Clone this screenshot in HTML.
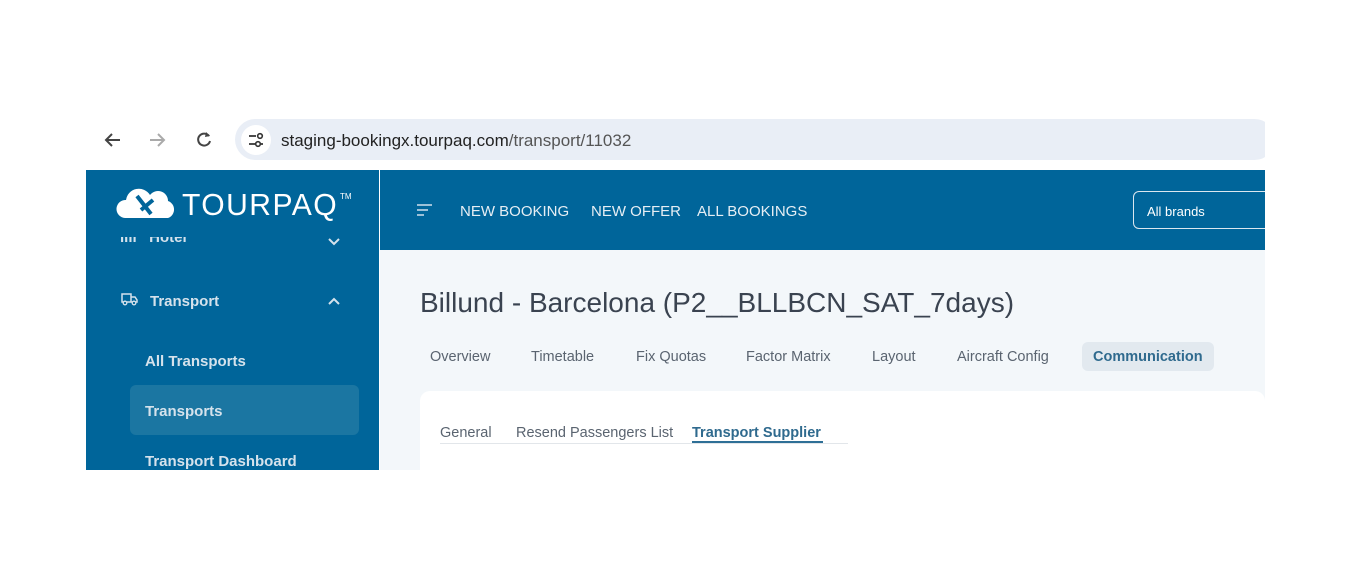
<!DOCTYPE html>
<html><head><style>
*{margin:0;padding:0;box-sizing:border-box}
body{width:1350px;height:581px;background:#fff;position:relative;overflow:hidden;font-family:"Liberation Sans",sans-serif}
.abs{position:absolute}
.side{left:86px;top:170px;width:293px;height:300px;background:#00659a;overflow:hidden}
.hdr{left:380px;top:170px;width:885px;height:80px;background:#00659a}
.main{left:380px;top:250px;width:885px;height:220px;background:#f3f7fa;overflow:hidden}
.st{color:#d5e2ec;font-weight:bold;font-size:15px;position:absolute}
.tab{position:absolute;top:349px;font-size:14.5px;color:#5a6470}
</style></head><body>
<div class="abs" style="left:86px;top:110px;width:1179px;height:60px;background:#fff"></div>
<svg class="abs" style="left:100px;top:128px" width="120" height="24" viewBox="0 0 120 24">
<path d="M20 12H6M12 6l-6 6 6 6" stroke="#444" stroke-width="2" fill="none"/>
<path d="M50 12h14M58 6l6 6-6 6" stroke="#aaa" stroke-width="2" fill="none"/>
<path d="M109 8a6 6 0 1 0 1 5" stroke="#444" stroke-width="2" fill="none"/><path d="M106 4l4 4-5 1z" fill="#444"/>
</svg>
<div class="abs" style="left:235px;top:119px;width:1040px;height:41px;border-radius:21px;background:#e9eef6"></div>
<div class="abs" style="left:241px;top:125px;width:30px;height:30px;border-radius:15px;background:#fff"></div>
<svg class="abs" style="left:246px;top:130px" width="20" height="20" viewBox="0 0 20 20"><path d="M3 6h7M3 14h7M14 14h3" stroke="#333" stroke-width="1.8"/><circle cx="14" cy="6" r="2.3" fill="none" stroke="#333" stroke-width="1.6"/><circle cx="12" cy="14" r="2.3" fill="none" stroke="#333" stroke-width="1.6"/></svg>
<div class="abs" style="left:281px;top:131px;font-size:17px;color:#222">staging-bookingx.tourpaq.com<span style="color:#555">/transport/11032</span></div>

<div class="abs side">
 <div class="abs" style="left:30px;top:67px;width:240px;height:12px;overflow:hidden">
  <div class="st" style="left:4px;top:-8px">ılıl &nbsp; Hotel</div>
 </div>
 <svg class="abs" style="left:242px;top:68px" width="12" height="8"><path d="M1 1l5 5 5-5" stroke="#d5e2ec" stroke-width="2" fill="none"/></svg>
 <svg class="abs" style="left:29px;top:14px" width="62" height="38" viewBox="0 0 62 38"><path d="M10 34a9 9 0 0 1 1-18 13 13 0 0 1 24-5 10 10 0 0 1 18 6 9 9 0 0 1 0 17z" fill="#fff"/><path d="M22 12l14 18M26 26l12-10" stroke="#00659a" stroke-width="4"/></svg>
 <div class="abs" style="left:96px;top:17px;font-size:31px;color:#fff;letter-spacing:1.5px;transform:scaleX(0.97);transform-origin:left">TOURPAQ</div>
 <div class="abs" style="left:254px;top:22px;font-size:8px;color:#fff">TM</div>
 <svg class="abs" style="left:35px;top:122px" width="17" height="14" viewBox="0 0 17 14"><path d="M1 2h9v8H1zM10 5h4l2 3v2h-6" fill="none" stroke="#d5e2ec" stroke-width="1.5"/><circle cx="4" cy="11" r="1.8" fill="#00659a" stroke="#d5e2ec" stroke-width="1.3"/><circle cx="13" cy="11" r="1.8" fill="#00659a" stroke="#d5e2ec" stroke-width="1.3"/></svg>
 <div class="st" style="left:64px;top:123px">Transport</div>
 <svg class="abs" style="left:242px;top:127px" width="12" height="8"><path d="M1 7l5-5 5 5" stroke="#d5e2ec" stroke-width="2" fill="none"/></svg>
 <div class="st" style="left:59px;top:183px">All Transports</div>
 <div class="abs" style="left:44px;top:215px;width:229px;height:50px;border-radius:6px;background:#1b76a2"></div>
 <div class="st" style="left:59px;top:233px">Transports</div>
 <div class="st" style="left:59px;top:283px">Transport Dashboard</div>
</div>

<div class="abs hdr">
 <svg class="abs" style="left:37px;top:34px" width="16" height="13"><path d="M0 1h15M0 6h11M0 11h7" stroke="#cfe0ec" stroke-width="1.6"/></svg>
 <div class="abs" style="left:80px;top:33px;color:#e6eef4;font-size:15px">NEW BOOKING</div>
 <div class="abs" style="left:211px;top:33px;color:#e6eef4;font-size:15px">NEW OFFER</div>
 <div class="abs" style="left:317px;top:33px;color:#e6eef4;font-size:15px">ALL BOOKINGS</div>
 <div class="abs" style="left:753px;top:21px;width:200px;height:38px;border:1px solid #dbe7ef;border-radius:6px"></div>
 <div class="abs" style="left:767px;top:34px;color:#fff;font-size:13px">All brands</div>
</div>
<div class="abs main">
 <div class="abs" style="left:40px;top:37px;font-size:28px;color:#3a4350">Billund - Barcelona (P2__BLLBCN_SAT_7days)</div>
 <div class="abs" style="left:702px;top:92px;width:132px;height:29px;border-radius:6px;background:#e2e9ef"></div>
 <div class="abs" style="left:40px;top:141px;width:845px;height:100px;background:#fff;border-radius:10px"></div>
 <div class="abs" style="left:60px;top:193px;width:408px;height:1px;background:#e2e6ea"></div>
 <div class="abs" style="left:312px;top:191px;width:131px;height:2px;background:#2e6f96"></div>
</div>
<div class="tab" style="left:430px">Overview</div>
<div class="tab" style="left:531px">Timetable</div>
<div class="tab" style="left:636px">Fix Quotas</div>
<div class="tab" style="left:746px">Factor Matrix</div>
<div class="tab" style="left:872px">Layout</div>
<div class="tab" style="left:957px">Aircraft Config</div>
<div class="tab" style="left:1093px;color:#2f6a8e;font-weight:bold">Communication</div>
<div class="tab" style="left:440px;top:425px">General</div>
<div class="tab" style="left:516px;top:425px">Resend Passengers List</div>
<div class="tab" style="left:692px;top:425px;color:#2f6a8e;font-weight:bold">Transport Supplier</div>
<div class="abs" style="left:1265px;top:100px;width:85px;height:420px;background:#fff"></div>
</body></html>
